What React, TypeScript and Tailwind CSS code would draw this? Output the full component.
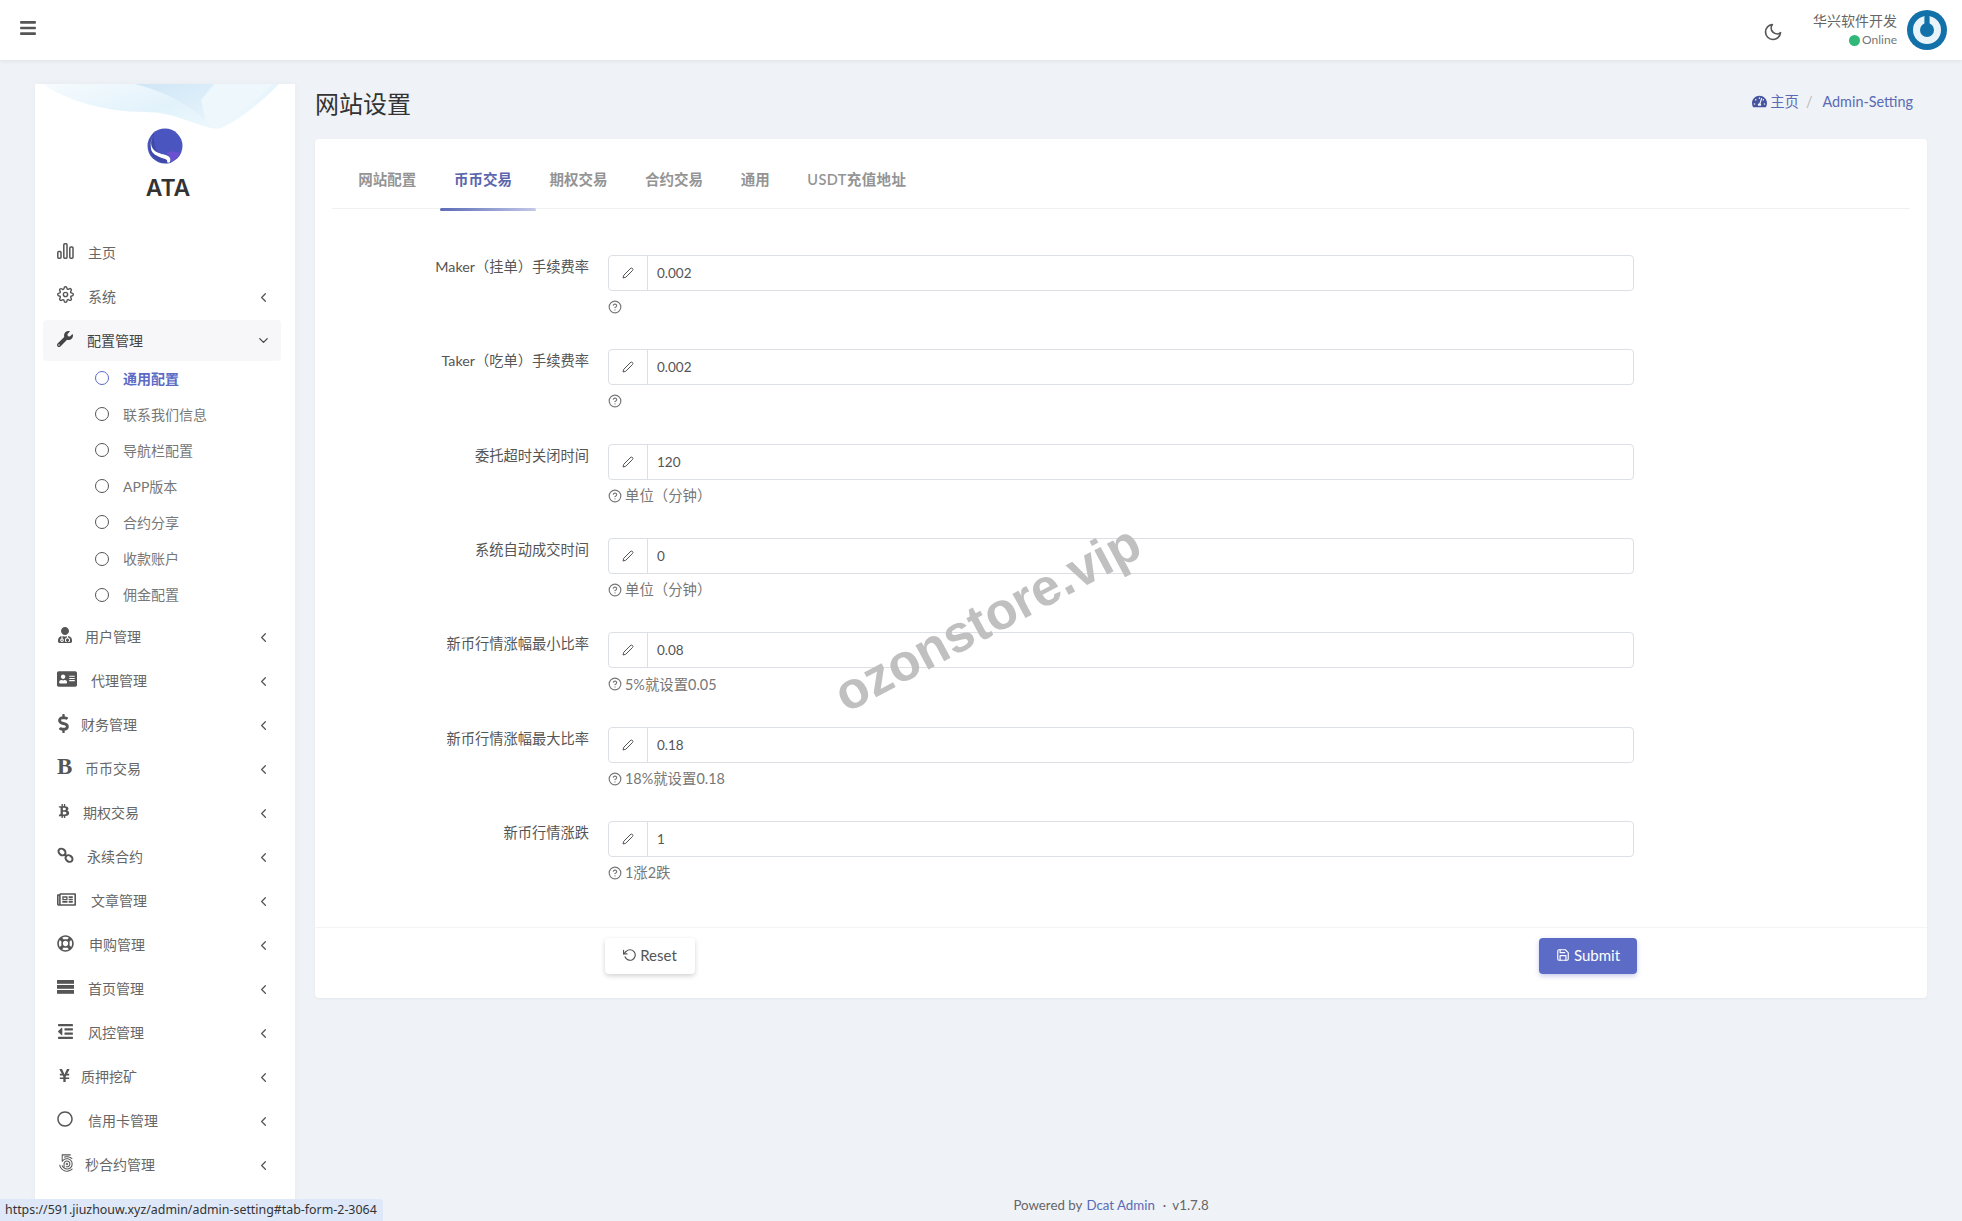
import type { ReactNode } from "react";
import {
  FaAddressCard,
  FaBars,
  FaBtc,
  FaDollarSign,
  FaOutdent,
  FaRegCircle,
  FaRegLifeRing,
  FaRegNewspaper,
  FaTachometerAlt,
  FaUserMd,
  FaWrench,
  FaYenSign,
  Fa500Px,
} from "react-icons/fa";
import {
  FiChevronDown,
  FiChevronLeft,
  FiEdit2,
  FiHelpCircle,
  FiMoon,
  FiRotateCcw,
  FiSave,
  FiSettings,
} from "react-icons/fi";

const font = "font-['Lato','Noto_Sans_CJK_SC',sans-serif]";

type MenuItem = { label: string; icon: ReactNode; box: string; noArrow?: boolean };

const BarsIcon = () => (
  <svg width="17" height="16" viewBox="0 0 17 16" fill="none" stroke="currentColor" strokeWidth="1.5">
    <rect x="0.8" y="8.5" width="3.2" height="6.7" rx="1" />
    <rect x="6.8" y="0.8" width="3.2" height="14.4" rx="1" />
    <rect x="12.8" y="4" width="3.2" height="11.2" rx="1" />
  </svg>
);

const ChainIcon = () => (
  <svg width="17" height="17" viewBox="0 0 17 17" fill="none" stroke="currentColor" strokeWidth="2">
    <ellipse cx="5" cy="5" rx="3.8" ry="3" transform="rotate(38 5 5)" />
    <ellipse cx="12" cy="11.5" rx="3.8" ry="3" transform="rotate(38 12 11.5)" />
    <path d="M7 7l3 2.5" />
  </svg>
);

const StackIcon = () => (
  <svg width="17" height="14" viewBox="0 0 17 14" fill="currentColor">
    <rect width="17" height="3.8" />
    <rect y="5" width="17" height="3.8" />
    <rect y="10" width="17" height="3.8" />
  </svg>
);

const topItems: MenuItem[] = [
  { label: "主页", icon: <BarsIcon />, box: "w-[31px]", noArrow: true },
  { label: "系统", icon: <FiSettings size={17} />, box: "w-[31px]" },
];

const subItems = ["通用配置", "联系我们信息", "导航栏配置", "APP版本", "合约分享", "收款账户", "佣金配置"];

const lowerItems: MenuItem[] = [
  { label: "用户管理", icon: <FaUserMd size={16} />, box: "w-[28px]" },
  { label: "代理管理", icon: <FaAddressCard size={20} />, box: "w-[34px]" },
  { label: "财务管理", icon: <FaDollarSign size={19} className="-ml-[3px]" />, box: "w-[24px]" },
  {
    label: "币币交易",
    icon: <span className="text-[23px] font-bold leading-[20px] font-['Liberation_Serif',serif]">B</span>,
    box: "w-[28px]",
  },
  { label: "期权交易", icon: <FaBtc size={14} />, box: "w-[26px]" },
  { label: "永续合约", icon: <ChainIcon />, box: "w-[30px]" },
  { label: "文章管理", icon: <FaRegNewspaper size={19} />, box: "w-[34px]" },
  { label: "申购管理", icon: <FaRegLifeRing size={17} />, box: "w-[32px]" },
  { label: "首页管理", icon: <StackIcon />, box: "w-[31px]" },
  { label: "风控管理", icon: <FaOutdent size={17} />, box: "w-[31px]" },
  { label: "质押挖矿", icon: <FaYenSign size={15} />, box: "w-[24px]" },
  { label: "信用卡管理", icon: <FaRegCircle size={16} />, box: "w-[31px]" },
  { label: "秒合约管理", icon: <Fa500Px size={18} />, box: "w-[28px]" },
];

const tabs = ["网站配置", "币币交易", "期权交易", "合约交易", "通用", "USDT充值地址"];

const fields = [
  { label: "Maker（挂单）手续费率", value: "0.002", help: "" },
  { label: "Taker（吃单）手续费率", value: "0.002", help: "" },
  { label: "委托超时关闭时间", value: "120", help: "单位（分钟）" },
  { label: "系统自动成交时间", value: "0", help: "单位（分钟）" },
  { label: "新币行情涨幅最小比率", value: "0.08", help: "5%就设置0.05" },
  { label: "新币行情涨幅最大比率", value: "0.18", help: "18%就设置0.18" },
  { label: "新币行情涨跌", value: "1", help: "1涨2跌" },
];

const NavRow = ({ item }: { item: MenuItem }) => (
  <div className="flex h-[44px] items-center pl-[22px] pr-[24px] text-[14px] text-[#666]">
    <span className={`${item.box} -mt-[3px] flex shrink-0 items-center text-[#555]`}>{item.icon}</span>
    <span className="flex-1">{item.label}</span>
    {!item.noArrow && <FiChevronLeft size={15} className="mt-[2px] text-[#555]" />}
  </div>
);

const Logo = () => (
  <svg width="36" height="36" viewBox="0 0 36 36">
    <circle cx="18" cy="18" r="17.5" fill="#4a55bf" />
    <path d="M24 34c4-2 7-5 9-9-5-2-10-2-14 0 3 1 5 5 5 9z" fill="#6d50d0" />
    <path d="M7 4C1 11 0 25 8 31c4 3 10 5 15 4 2-1 1-4-2-5-5-2-10-3-12-9C7 15 6 10 7 4z" fill="#3f4aa8" />
    <path d="M7 6C3 12 3 19 8 23c4 3 9 3 13 5 2 1 3 3 2 6-1 1-2 1-3 0 1-2-1-3-5-4-5-2-10-4-11-9C3 15 4 10 7 6z" fill="#fff" />
  </svg>
);

const Avatar = () => (
  <svg width="40" height="40" viewBox="0 0 40 40">
    <circle cx="20" cy="20" r="20" fill="#1271a9" />
    <circle cx="20" cy="20" r="10.5" fill="none" stroke="#e9f3fa" strokeWidth="7" />
    <rect x="17.4" y="5" width="5.2" height="16" rx="2.6" fill="#1271a9" />
  </svg>
);

const Sidebar = () => (
  <aside className="relative ml-[35px] mt-[24px] h-[1137px] w-[260px] shrink-0 overflow-hidden bg-white shadow-[0_0_8px_rgba(0,0,0,0.04)]">
    <svg className="absolute left-0 top-0" width="260" height="48" viewBox="0 0 260 48">
      <defs>
        <linearGradient id="wave" x1="0" y1="0" x2="1" y2="0.6">
          <stop offset="0" stopColor="#f6fbfe" />
          <stop offset="0.6" stopColor="#e2f2fb" />
          <stop offset="1" stopColor="#eef8fd" />
        </linearGradient>
        <linearGradient id="facet" x1="0" y1="0" x2="1" y2="1">
          <stop offset="0" stopColor="#c8e2f5" />
          <stop offset="1" stopColor="#e6f3fb" />
        </linearGradient>
      </defs>
      <path d="M8 0C30 16 70 28 110 28c30 0 50 14 72 17 14-3 42-24 62-45z" fill="url(#wave)" />
      <path d="M100 0c30 8 50 18 70 36l-4-20 12-16z" fill="url(#facet)" opacity="0.8" />
      <path d="M166 16l6 22 6 6c16-6 40-24 60-44h-58z" fill="#edf7fc" />
    </svg>
    <div className="relative flex h-[146px] flex-col items-center pt-[44px]">
      <div className="-ml-[1px]">
        <Logo />
      </div>
      <div className="ml-[6px] mt-[11px] text-[23px] font-semibold leading-[26px] text-[#333] font-['Inter',sans-serif]">ATA</div>
    </div>
    <nav className={font}>
      {topItems.map((item) => (
        <NavRow key={item.label} item={item} />
      ))}
      <div className="flex h-[44px] items-center pl-[8px] pr-[14px]">
        <div className="flex h-[41px] w-full items-center rounded-[4px] bg-[#f7f7fa] pl-[14px] pr-[10px] text-[14px] text-[#444]">
          <span className="-mt-[3px] flex w-[30px] shrink-0 items-center text-[#444]">
            <FaWrench size={16} />
          </span>
          <span className="flex-1">配置管理</span>
          <FiChevronDown size={15} />
        </div>
      </div>
      <div className="-mt-[2px] mb-[2px]">
        {subItems.map((label, i) => (
          <div key={label} className={`flex h-[36.1px] items-center pl-[60px] text-[14px] ${i === 0 ? "font-bold text-[#5c6bc6]" : "text-[#777]"}`}>
            <span className={`mr-[14px] h-[14px] w-[14px] rounded-full border-[1.5px] ${i === 0 ? "border-[#5c6bc6]" : "border-[#555]"}`} />
            {label}
          </div>
        ))}
      </div>
      {lowerItems.map((item) => (
        <NavRow key={item.label} item={item} />
      ))}
    </nav>
  </aside>
);

const FormRow = ({ label, value, help }: { label: string; value: string; help: string }) => (
  <div className="flex h-[94.33px]">
    <label className="w-[274px] shrink-0 pt-[3px] text-right text-[14.25px] leading-[18px] text-[#555]">{label}</label>
    <div className="ml-[19px] w-[1026px]">
      <div className="flex h-[36px] rounded-[4px] border border-[#dcdfe3] text-[13.5px] text-[#555]">
        <span className="flex w-[39px] shrink-0 items-center justify-center border-r border-[#dcdfe3]">
          <FiEdit2 size={12} />
        </span>
        <span className="flex items-center pl-[9px]">{value}</span>
      </div>
      <div className="mt-[6px] flex h-[20px] items-center gap-[3px] text-[14.4px] text-[#777]">
        <FiHelpCircle size={14} />
        <span>{help}</span>
      </div>
    </div>
  </div>
);

export default function App() {
  return (
    <div className={`relative h-[1221px] overflow-hidden bg-[#eff2f7] ${font}`}>
      <header className="flex h-[60px] items-center justify-between bg-white pl-[19px] pr-[15px] shadow-[0_1px_4px_rgba(0,0,0,0.08)]">
        <FaBars size={18} className="-mt-[4px] text-[#555]" />
        <div className="flex items-center">
          <FiMoon size={20} className="mr-[30px] mt-[4px] text-[#555]" />
          <div className="mr-[10px] flex flex-col items-end">
            <span className="text-[14px] leading-[20px] text-[#666]">华兴软件开发</span>
            <span className="flex items-center gap-[2px] text-[12px] leading-[18px] text-[#777]">
              <span className="h-[11px] w-[11px] rounded-full bg-[#2fb878]" />
              Online
            </span>
          </div>
          <Avatar />
        </div>
      </header>

      <div className="flex">
        <Sidebar />
        <main className="ml-[20px] flex h-[1161px] w-[1612px] flex-col">
          <div className="flex h-[79px] items-center justify-between pr-[14px] pt-[9px]">
            <h1 className="text-[24px] font-normal text-[#333]">网站设置</h1>
            <div className="-mt-[4px] flex items-center text-[14.4px] text-[#5a6bb5]">
              <FaTachometerAlt size={15} className="mr-[3px] text-[#46549f]" />
              主页
              <span className="mx-[7px] text-[#bbb]">/</span>
              <span className="ml-[3px]">Admin-Setting</span>
            </div>
          </div>

          <section className="rounded-[4px] bg-white shadow-[0_1px_3px_rgba(0,0,0,0.05)]">
            <div className="mx-[17px] flex h-[70px] border-b border-[#f0f0f0] pl-[7.5px]">
              {tabs.map((tab, i) => (
                <div
                  key={tab}
                  className={`relative flex h-[70px] items-center px-[18.8px] pt-[12px] text-[14.5px] font-semibold ${i === 1 ? "text-[#5a66ae]" : "text-[#949494]"} ${i === 5 ? "tracking-[0.4px]" : ""}`}
                >
                  {tab}
                  {i === 1 && (
                    <span className="absolute bottom-[-2px] left-[5px] h-[3px] w-[96px] rounded-[2px] bg-gradient-to-r from-[#5c6bb5] to-[#c5c9e8]" />
                  )}
                </div>
              ))}
            </div>
            <div className="pb-[12px] pt-[46px]">
              {fields.map((f) => (
                <FormRow key={f.label + f.value} label={f.label} value={f.value} help={f.help} />
              ))}
            </div>
            <div className="flex h-[71px] justify-between border-t border-[#f4f4f4] pl-[290px] pr-[290px] pt-[10px]">
              <button className="flex h-[36px] w-[90px] items-center justify-center gap-[3px] rounded-[4px] bg-white pb-[3px] text-[15px] text-[#555] shadow-[0_2px_5px_rgba(0,0,0,0.18)]">
                <FiRotateCcw size={14} />
                Reset
              </button>
              <button className="flex h-[36px] w-[98px] items-center justify-center gap-[4px] rounded-[4px] bg-[#5c6bc6] pb-[3px] text-[15px] text-white shadow-[0_2px_5px_rgba(92,107,198,0.35)]">
                <FiSave size={14} />
                Submit
              </button>
            </div>
          </section>

          <footer className="mt-auto flex h-[30px] items-center justify-center pr-[20px] text-[13.3px] text-[#666]">
            Powered by<span className="mx-[4px] text-[#5a6bb5]">Dcat Admin</span>
            <span className="mx-[4px]">·</span>
            <span className="ml-[2px]">v1.7.8</span>
          </footer>
        </main>
      </div>

      <div className="absolute left-[818px] top-[590px] rotate-[-28deg] text-[52px] font-bold leading-[56px] text-[#c0c0c0] font-['Liberation_Sans',sans-serif]">
        ozonstore.vip
      </div>

      <div className="absolute bottom-0 left-0 flex h-[22px] w-[383px] items-center rounded-tr-[4px] bg-[#dee8f8] pl-[5px] text-[12.4px] whitespace-nowrap text-[#333] font-['Noto_Sans',sans-serif]">
        https://591.jiuzhouw.xyz/admin/admin-setting#tab-form-2-3064
      </div>
    </div>
  );
}
